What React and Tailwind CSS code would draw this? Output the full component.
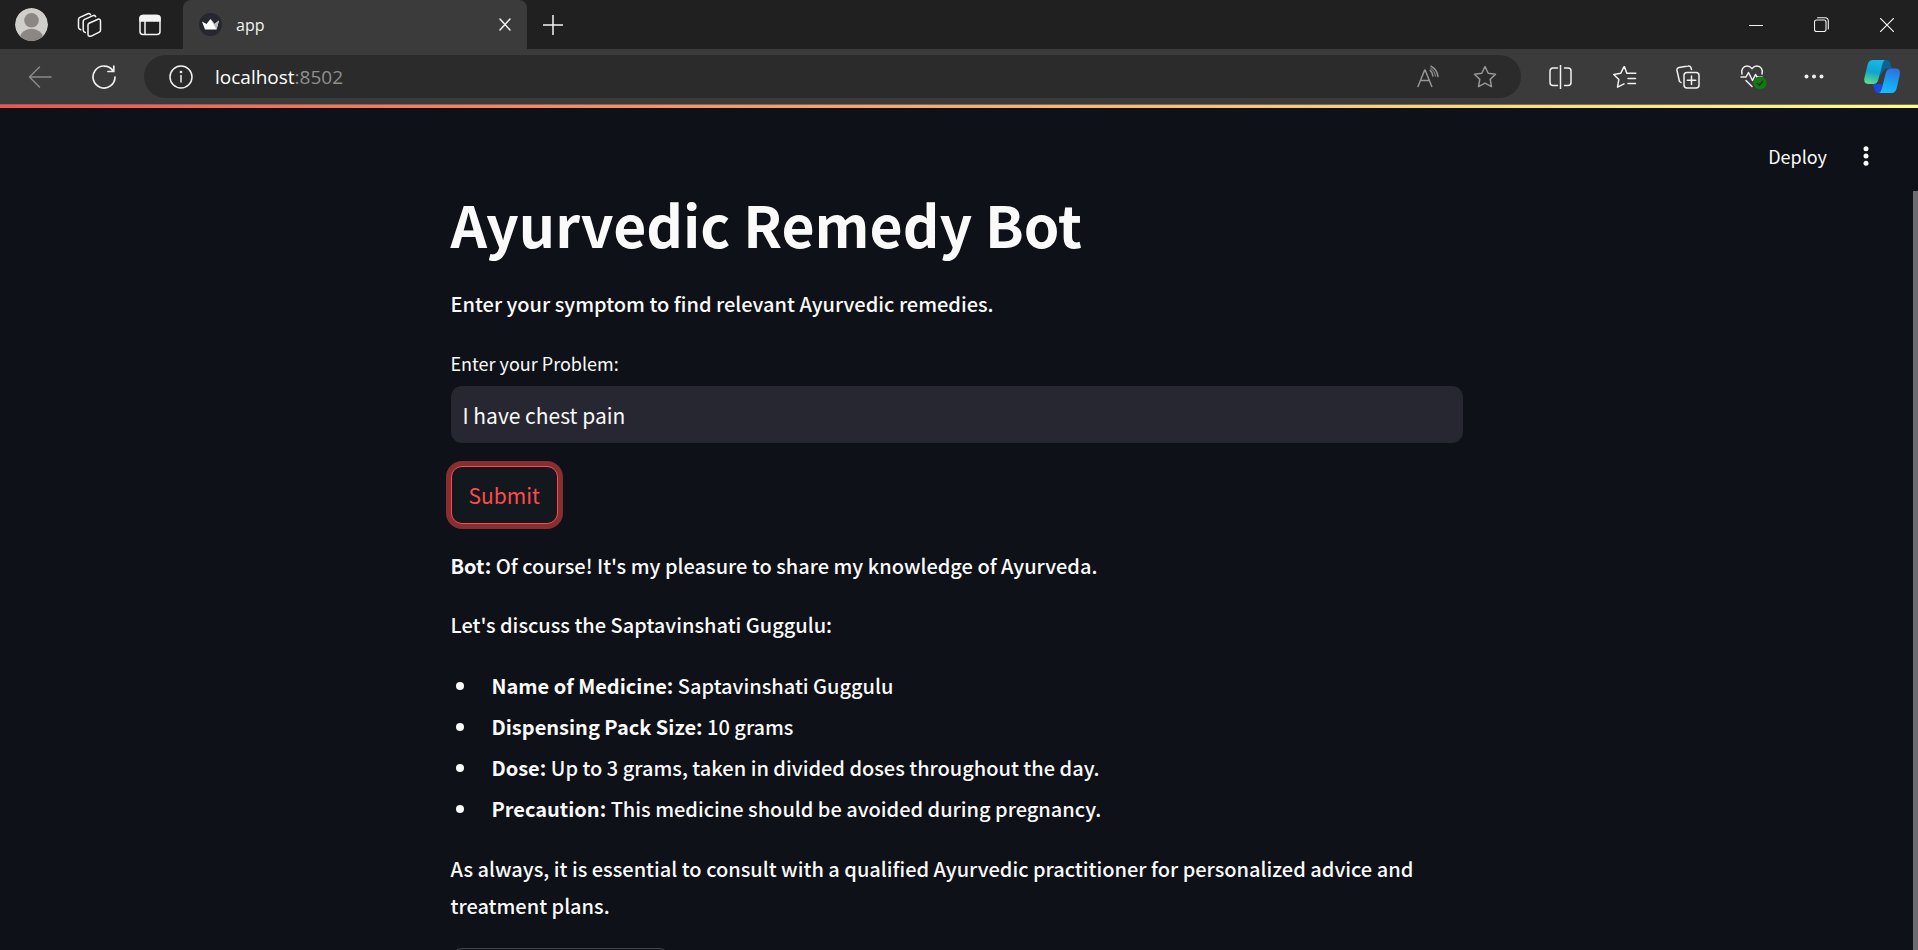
const ui = "font-['Open_Sans','Noto_Sans',sans-serif]";

function Svg({ w = 26, h = 26, vb = '0 0 26 26', children, className = '' }) {
  return (
    <svg width={w} height={h} viewBox={vb} fill="none" stroke="currentColor" strokeWidth="1.5" strokeLinecap="round" strokeLinejoin="round" className={'shrink-0 ' + className} aria-hidden="true">
      {children}
    </svg>
  );
}

function IconButton({ label, className = '', children }) {
  return (
    <button type="button" aria-label={label} className={'flex shrink-0 items-center justify-center ' + className}>
      {children}
    </button>
  );
}

function TitleBar() {
  return (
    <div className="flex h-[49px] items-stretch bg-[#202020] text-[#f4f4f4]">
      <div className="flex w-[183px] shrink-0 items-center">
        <IconButton label="Profile" className="ml-[15px] w-[33px]">
          <svg width="33" height="33" viewBox="0 0 33 33">
            <defs><clipPath id="avatar"><circle cx="16.5" cy="16.5" r="16.5" /></clipPath></defs>
            <g clipPath="url(#avatar)">
              <circle cx="16.5" cy="16.5" r="16.5" fill="#d0cecb" />
              <circle cx="16.5" cy="12.3" r="7.3" fill="#8b8784" />
              <ellipse cx="16.5" cy="30" rx="11.5" ry="9.2" fill="#8b8784" />
            </g>
          </svg>
        </IconButton>
        <IconButton label="Workspaces" className="ml-7">
          <Svg>
            <path d="M13 11.300 22 7.300c1.300-.6 2.500.2 2.500 1.600v9.300c0 .9-.4 1.500-1.200 1.900l-8 4c-1.500.7-3.300-.2-3.300-1.700v-9.300c0-.8.300-1.500 1-1.800z" />
            <path d="M9.300 20.500C8 20.200 7.200 19.300 7.200 18V9.500c0-1 .5-1.700 1.400-2.100L17 3.600c1-.4 2.200 0 2.700 1" />
            <path d="M4.700 17.800C3.300 17.300 2.500 16.500 2.500 15.200V7.500c0-1 .5-1.700 1.400-2.100l8-3.600c1-.4 2.200 0 2.600 1" />
          </Svg>
        </IconButton>
        <IconButton label="Tab actions" className="ml-[37px]">
          <Svg w={22} h={22} vb="0 0 22 22">
            <rect x="1" y="1.500" width="20" height="19" rx="3" />
            <path d="M6 7v13" />
            <path d="M1 7V4.500a3 3 0 0 1 3-3h14a3 3 0 0 1 3 3V7z" fill="currentColor" />
          </Svg>
        </IconButton>
      </div>
      <div className="flex w-[344px] shrink-0 items-center rounded-t-lg bg-[#3b3b3b] px-4">
        <svg width="23" height="23" viewBox="0 0 23 23" aria-hidden="true">
          <circle cx="11.500" cy="11.500" r="11.500" fill="#262730" />
          <path d="M3 8.500 7.500 11 11.500 6 15.500 11 20 7.500 17.500 16.500h-11.500z" fill="#fff" />
          <path d="M11.500 6 15.500 11 20 7.500 17.500 16.500z" fill="#bbb" />
        </svg>
        <span className={ui + ' ml-[14px] flex-1 text-base leading-6'}>app</span>
        <IconButton label="Close tab">
          <Svg w={12} h={13} vb="0 0 12 13"><path d="m1 1 10 11M11 1 1 12" /></Svg>
        </IconButton>
      </div>
      <IconButton label="New tab" className="ml-4">
        <Svg w={20} h={20} vb="0 0 20 20"><path d="M10 0v20M0 10h20" strokeLinecap="butt" /></Svg>
      </IconButton>
      <div className="ml-auto flex items-center gap-[51px] pr-6">
        <IconButton label="Minimize"><Svg w={14} h={14} vb="0 0 14 14"><path d="M0 7.500h14" strokeWidth="1" strokeLinecap="butt" /></Svg></IconButton>
        <IconButton label="Restore">
          <Svg w={15} h={15} vb="0 0 15 15">
            <rect x=".5" y="3" width="11.500" height="11.500" rx="2" strokeWidth="1.100" />
            <path d="M3.500.7H11a3.300 3.300 0 0 1 3.300 3.300v8" strokeWidth="1.100" />
          </Svg>
        </IconButton>
        <IconButton label="Close"><Svg w={14} h={14} vb="0 0 14 14"><path d="m0 0 14 14M14 0 0 14" strokeWidth="1.200" /></Svg></IconButton>
      </div>
    </div>
  );
}

const star = 'M12 1.500l3.200 6.700 7.300 1-5.300 5.200 1.300 7.300L12 18.200l-6.500 3.500 1.300-7.300L1.500 9.200l7.300-1z';

function NavBar() {
  return (
    <div className="flex h-[56px] items-center border-b border-[#707070] bg-[#3b3b3b] text-[#f0f0f0]">
      <IconButton label="Back" className="ml-7 text-[#8a8a8a]">
        <Svg w={24} h={22} vb="0 0 24 22"><path d="M11.500 1 1.500 11l10 10M1.500 11H23" /></Svg>
      </IconButton>
      <IconButton label="Refresh" className="ml-10">
        <Svg w={24} h={24} vb="0 0 24 24"><path d="M21 5.700A11 11 0 1 0 23 12M21.800 1v5.500h-5.800" strokeWidth="1.700" /></Svg>
      </IconButton>
      <div className="ml-7 flex h-[43px] min-w-0 flex-1 items-center rounded-full bg-[#2b2b2b] pr-6 pl-[25px]">
        <IconButton label="View site information">
          <Svg w={24} h={24} vb="0 0 24 24"><circle cx="12" cy="12" r="11" /><path d="M12 10.500v6.500" /><circle cx="12" cy="7" r=".6" fill="currentColor" /></Svg>
        </IconButton>
        <a href="http://localhost:8502" className={ui + ' ml-[22px] flex-1 text-[19px] leading-7 text-white'}>
          localhost<span className="text-[#8f8f8f]">:8502</span>
        </a>
        <IconButton label="Read aloud" className="text-[#969696]">
          <Svg w={22} h={24} vb="0 0 22 24">
            <path d="M1 21.500 7.700 5h.4l6.700 16.500M3.400 15.500h9M13.300 5.300c1.600 1.300 2.400 3 2.500 5.700M14 1.200c4 2.300 6.500 6 7 10.300" />
            <path d="M13.700 3.200c2.600 1.700 4.300 4.500 4.700 8" strokeWidth="1" />
          </Svg>
        </IconButton>
        <IconButton label="Add to favorites" className="ml-[34px] text-[#969696]"><Svg w={24} h={24} vb="0 0 24 24"><path d={star} /></Svg></IconButton>
      </div>
      <div className="flex shrink-0 items-center pl-7">
        <IconButton label="Split screen">
          <Svg w={24} h={24} vb="0 0 24 24"><path d="M8.500 3H4a3 3 0 0 0-3 3v11.500a3 3 0 0 0 3 3h4.500M15.500 3H19a3 3 0 0 1 3 3v11.500a3 3 0 0 1-3 3h-3.500M11.500 0v24" strokeLinejoin="miter" /></Svg>
        </IconButton>
        <IconButton label="Favorites" className="ml-[39px]">
          <Svg w={26} h={24} vb="0 0 26 24"><path d="M14.800 8.200 12.500 1.800h-.6L8.800 8.200l-7 1.200 5 5.200-1.300 7.600 6.500-3.300M14.800 8.200h9M16 13.500h7.500M16 18.500h7.500" /></Svg>
        </IconButton>
        <IconButton label="Collections" className="ml-[38px]">
          <Svg w={24} h={24} vb="0 0 24 24"><rect x="8" y="7.500" width="15" height="15.500" rx="3" /><path d="M15.500 11v8.500M11.300 15.200h8.500M5 17.500 3.500 16.500 1 5.500C.7 4 1.500 2.900 3 2.600L12 1c1.400-.3 2.500.4 3 1.800l.5 1.700" /></Svg>
        </IconButton>
        <IconButton label="Browser essentials" className="ml-10">
          <Svg w={27} h={26} vb="0 0 27 26">
            <path d="M2 10C.7 5.500 3.500 2 7 2c2 0 3.700 1 5 2.600C13.300 3 15 2 17 2c3.700 0 6.300 3.500 5 8M1 13h5l2.500-4.500 4 8 3-6 1.500 2.500h5M6 16.500l6 6" />
            <circle cx="20" cy="19" r="6.500" fill="#107c10" stroke="none" />
            <path d="m17.300 19.200 2 2 3.500-4" stroke="#2b2b2b" />
          </Svg>
        </IconButton>
        <IconButton label="Settings and more" className="ml-[37px]">
          <svg width="20" height="5" viewBox="0 0 20 5" fill="currentColor"><circle cx="2.500" cy="2.500" r="2" /><circle cx="10" cy="2.500" r="2" /><circle cx="17.500" cy="2.500" r="2" /></svg>
        </IconButton>
        <IconButton label="Copilot" className="mr-[18px] ml-10">
          <svg width="36" height="33" viewBox="0 0 36 33">
            <defs>
              <linearGradient id="ca" x1=".5" y1="0" x2=".3" y2="1"><stop offset="0" stopColor="#18b7e8" /><stop offset=".5" stopColor="#0fa5cf" /><stop offset="1" stopColor="#60dd86" /></linearGradient>
              <linearGradient id="cb" x1=".6" y1="0" x2=".4" y2="1"><stop offset="0" stopColor="#2f6fe0" /><stop offset=".6" stopColor="#16a5f5" /><stop offset="1" stopColor="#1db8ff" /></linearGradient>
            </defs>
            <path d="M17 0h6c3 0 3.500 3 4.500 8.500h-6L16 16z" fill="#0b6390" />
            <path d="M8 24h10l2 9h-5c-3.500 0-4.500-3-5-6z" fill="#1c49db" />
            <path d="M9 0h12c-2 1-3 5-4 10l-2.500 9c-1 4-2.500 5-6 5H4C.5 24-.3 21 .5 17.500L3.500 5C4.300 1.500 6 0 9 0z" fill="url(#ca)" />
            <path d="M27.500 33H15c2-1 3-4 4-9l2.500-10c1-4 2.500-5.500 6-5.500H32c3.500 0 4.500 3 3.700 6.500L33 27c-.8 4-2.500 6-5.500 6z" fill="url(#cb)" />
          </svg>
        </IconButton>
      </div>
    </div>
  );
}

const medicine = [
  ['Name of Medicine:', 'Saptavinshati Guggulu'],
  ['Dispensing Pack Size:', '10 grams'],
  ['Dose:', 'Up to 3 grams, taken in divided doses throughout the day.'],
  ['Precaution:', 'This medicine should be avoided during pregnancy.'],
];

export default function App() {
  return (
    <div className="flex h-screen flex-col overflow-hidden bg-[#0e1117]">
      <header className="shrink-0">
        <TitleBar />
        <NavBar />
      </header>
      <div className="h-[3px] shrink-0 bg-linear-to-r from-[#ff4b4b] to-[#fffd80]" />
      <div className="flex min-h-0 flex-1 flex-col font-['Noto_Sans_CJK_SC',sans-serif] text-[20px] leading-[37px] font-medium text-[#fafafa]">
        <div className="flex h-[83px] shrink-0 items-center justify-end gap-9 pt-3 pr-[49px]">
          <button type="button" className="text-[18px] leading-6 font-normal">Deploy</button>
          <IconButton label="Main menu">
            <svg width="6" height="20" viewBox="0 0 6 20" fill="currentColor"><circle cx="3" cy="2.700" r="2.500" /><circle cx="3" cy="10" r="2.500" /><circle cx="3" cy="17.300" r="2.500" /></svg>
          </IconButton>
        </div>
        <div className="flex min-h-0 flex-1">
          <main className="min-w-0 flex-1">
            <div className="mx-auto w-full max-w-[1012px]">
              <h1 className="text-[57px] leading-[64px] font-bold">Ayurvedic Remedy Bot</h1>
              <p className="mt-[30px]">Enter your symptom to find relevant Ayurvedic remedies.</p>
              <label htmlFor="problem" className="mt-[27px] block text-[18px] leading-7 font-normal">Enter your Problem:</label>
              <input id="problem" type="text" defaultValue="I have chest pain" className="mt-[9px] block h-[57px] w-full rounded-[11px] bg-[#262730] px-3 text-[21px] font-normal outline-none" />
              <button type="button" className="mt-[23px] block h-[58px] rounded-[11px] border border-[#ff4b4b] bg-[#13171e] px-[17px] text-[21px] font-normal text-[#ff4b4b] ring-[5px] ring-[#ff4b4b]/50">Submit</button>
              <p className="mt-[23px]"><strong className="font-bold">Bot:</strong> Of course! It's my pleasure to share my knowledge of Ayurveda.</p>
              <p className="mt-[22px]">Let's discuss the Saptavinshati Guggulu:</p>
              <ul className="mt-[24px] flex flex-col gap-1">
                {medicine.map(([name, text]) => (
                  <li key={name} className="flex items-center">
                    <span className="mr-7 ml-[5px] size-2 shrink-0 rounded-full bg-[#fafafa]" />
                    <span><strong className="font-bold">{name}</strong> {text}</span>
                  </li>
                ))}
              </ul>
              <p className="mt-[23px]">As always, it is essential to consult with a qualified Ayurvedic practitioner for personalized advice and treatment plans.</p>
              <button type="button" aria-label="More options" className="mt-[24px] block h-[58px] w-[219px] rounded-[11px] border border-[#41444c] bg-[#13171e]" />
            </div>
          </main>
          <div className="w-[5px] shrink-0 bg-[#6b6b70]" />
        </div>
      </div>
    </div>
  );
}
